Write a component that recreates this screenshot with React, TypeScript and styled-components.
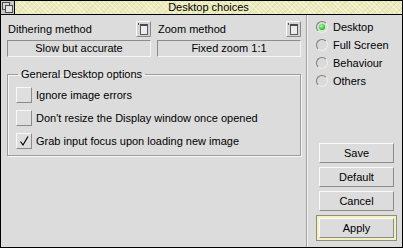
import React from 'react'
import styled, { createGlobalStyle } from 'styled-components'

const GlobalStyle = createGlobalStyle`
  html, body {
    margin: 0;
    padding: 0;
    background: #dcdcdc;
  }
  body {
    font-family: "Liberation Sans", Arial, sans-serif;
    font-size: 11px;
    color: #000;
  }
`

const Window = styled.div`
  width: 403px;
  height: 248px;
  box-sizing: border-box;
  border: 1px solid #000;
  background: #dcdcdc;
  display: flex;
  flex-direction: column;
`

const TitleBar = styled.div`
  height: 13px;
  flex: none;
  display: flex;
  border-bottom: 1px solid #000;
  background-color: #ebeabd;
  background-image:
    repeating-linear-gradient(45deg, rgba(255, 255, 240, 0.45) 0 1px, transparent 1px 3px),
    repeating-linear-gradient(-45deg, rgba(190, 190, 120, 0.25) 0 1px, transparent 1px 4px);
`

const BackIcon = styled.div`
  width: 13px;
  height: 13px;
  border-right: 1px solid #000;
  flex: none;
  display: flex;
`

const TitleText = styled.div`
  flex: 1;
  text-align: center;
  line-height: 13px;
`

const Body = styled.div`
  flex: 1;
  display: flex;
  min-height: 0;
`

const LeftPane = styled.div`
  width: 306px;
  box-sizing: border-box;
  border-right: 1px solid #a4a4a4;
  padding: 6px 0 0 6px;
  display: flex;
  flex-direction: column;
`

const RightPane = styled.div`
  flex: 1;
  box-sizing: border-box;
  border-left: 1px solid #f2f2f2;
  padding: 3px 0 6px 7px;
  display: flex;
  flex-direction: column;
`

const ChoiceRow = styled.div`
  display: flex;
  gap: 6px;
`

const Choice = styled.div`
  width: 144px;
  display: flex;
  flex-direction: column;
`

const LabelRow = styled.div`
  height: 16px;
  display: flex;
  align-items: center;
  justify-content: space-between;
  padding-left: 1px;
`

const MenuButton = styled.div`
  width: 15px;
  height: 16px;
  display: flex;
`

const Field = styled.div`
  margin-top: 3px;
  height: 17px;
  box-sizing: border-box;
  border: 1px solid;
  border-color: #8c8c8c #f6f6f6 #f6f6f6 #8c8c8c;
  text-align: center;
  line-height: 15px;
`

const Group = styled.fieldset`
  margin: 11px 0 0 0;
  width: 294px;
  box-sizing: border-box;
  border: 1px solid #9c9c9c;
  box-shadow: inset 1px 1px 0 #f6f6f6, 1px 1px 0 #f6f6f6;
  padding: 6px 0 6px 8px;
  display: flex;
  flex-direction: column;
  gap: 7px;
  min-inline-size: 0;
`

const Legend = styled.legend`
  padding: 0 3px;
  margin-left: 2px;
  line-height: 13px;
`

const CheckRow = styled.div`
  height: 16px;
  display: flex;
  align-items: center;
  gap: 4px;
`

const CheckBox = styled.div`
  width: 16px;
  height: 16px;
  box-sizing: border-box;
  border: 1px solid;
  border-color: #f8f8f8 #8a8a8a #8a8a8a #f8f8f8;
  background: #dedede;
  display: flex;
  align-items: center;
  justify-content: center;
`

const RadioRow = styled.div`
  height: 18px;
  display: flex;
  align-items: center;
  gap: 5px;
  padding-left: 1px;
`

const RadioDot = styled.div<{ $on?: boolean }>`
  width: 12px;
  height: 12px;
  box-sizing: border-box;
  border-radius: 50%;
  border: 1px solid;
  border-color: #7a7a7a #eeeeee #eeeeee #7a7a7a;
  background: #dadada;
  display: flex;
  align-items: center;
  justify-content: center;

  &::after {
    content: '';
    display: ${({ $on }) => ($on ? 'block' : 'none')};
    width: 6px;
    height: 6px;
    border-radius: 50%;
    background: radial-gradient(circle at 40% 35%, #b8ffb0 0, #33cc33 55%, #118811 100%);
    box-shadow: 0 0 0 1px #c8e8c0;
  }
`

const ButtonStack = styled.div`
  margin-top: auto;
  display: flex;
  flex-direction: column;
  gap: 4px;
`

const Button = styled.div`
  width: 75px;
  height: 20px;
  margin-left: 4px;
  box-sizing: border-box;
  border: 1px solid;
  border-color: #fafafa #8c8c8c #8c8c8c #fafafa;
  background: #dcdcdc;
  text-align: center;
  line-height: 18px;
`

const DefaultRing = styled.div`
  width: 81px;
  box-sizing: border-box;
  margin-left: 1px;
  border: 1px solid #8e8e7a;
  padding: 2px;
  background: #f2f2c0;

  ${Button} {
    margin-left: 0;
  }
`

const BackGlyph = () => (
  <svg width="13" height="13" viewBox="0 0 13 13">
    <rect width="13" height="13" fill="#c6c6c6" />
    <rect x="1.5" y="1.5" width="7" height="7" fill="#d6d6d6" stroke="#4a4a4a" />
    <rect x="4.5" y="4.5" width="7" height="7" fill="#e2e2e2" stroke="#4a4a4a" />
  </svg>
)

const MenuGlyph = () => (
  <svg width="15" height="16" viewBox="0 0 15 16">
    <rect width="15" height="16" fill="#d4d4d4" />
    <path d="M0.5 15.5 V0.5 H14.5" fill="none" stroke="#fbfbfb" />
    <path d="M0.5 15.5 H14.5 V0.5" fill="none" stroke="#8a8a8a" />
    <rect x="2" y="2" width="1" height="2" fill="#555" />
    <rect x="4.5" y="3.5" width="7" height="10" fill="#ececec" stroke="#5a5a5a" />
    <rect x="4" y="3" width="8" height="2" fill="#4a4a4a" />
  </svg>
)

const Tick = () => (
  <svg width="12" height="12" viewBox="0 0 12 12">
    <path d="M2.5 6.5 L5 10 L10 1.5" fill="none" stroke="#000" strokeWidth="1.2" />
  </svg>
)

const choices = [
  { label: 'Dithering method', value: 'Slow but accurate' },
  { label: 'Zoom method', value: 'Fixed zoom 1:1' },
]

const options = [
  { label: 'Ignore image errors', on: false },
  { label: "Don't resize the Display window once opened", on: false },
  { label: 'Grab input focus upon loading new image', on: true },
]

const sections = ['Desktop', 'Full Screen', 'Behaviour', 'Others']

export default function App() {
  return (
    <>
      <GlobalStyle />
      <Window>
        <TitleBar>
          <BackIcon>
            <BackGlyph />
          </BackIcon>
          <TitleText>Desktop choices</TitleText>
        </TitleBar>
        <Body>
          <LeftPane>
            <ChoiceRow>
              {choices.map((c) => (
                <Choice key={c.label}>
                  <LabelRow>
                    <span>{c.label}</span>
                    <MenuButton>
                      <MenuGlyph />
                    </MenuButton>
                  </LabelRow>
                  <Field>{c.value}</Field>
                </Choice>
              ))}
            </ChoiceRow>
            <Group>
              <Legend>General Desktop options</Legend>
              {options.map((o) => (
                <CheckRow key={o.label}>
                  <CheckBox>{o.on && <Tick />}</CheckBox>
                  <span>{o.label}</span>
                </CheckRow>
              ))}
            </Group>
          </LeftPane>
          <RightPane>
            {sections.map((s, i) => (
              <RadioRow key={s}>
                <RadioDot $on={i === 0} />
                <span>{s}</span>
              </RadioRow>
            ))}
            <ButtonStack>
              <Button>Save</Button>
              <Button>Default</Button>
              <Button>Cancel</Button>
              <DefaultRing>
                <Button>Apply</Button>
              </DefaultRing>
            </ButtonStack>
          </RightPane>
        </Body>
      </Window>
    </>
  )
}
